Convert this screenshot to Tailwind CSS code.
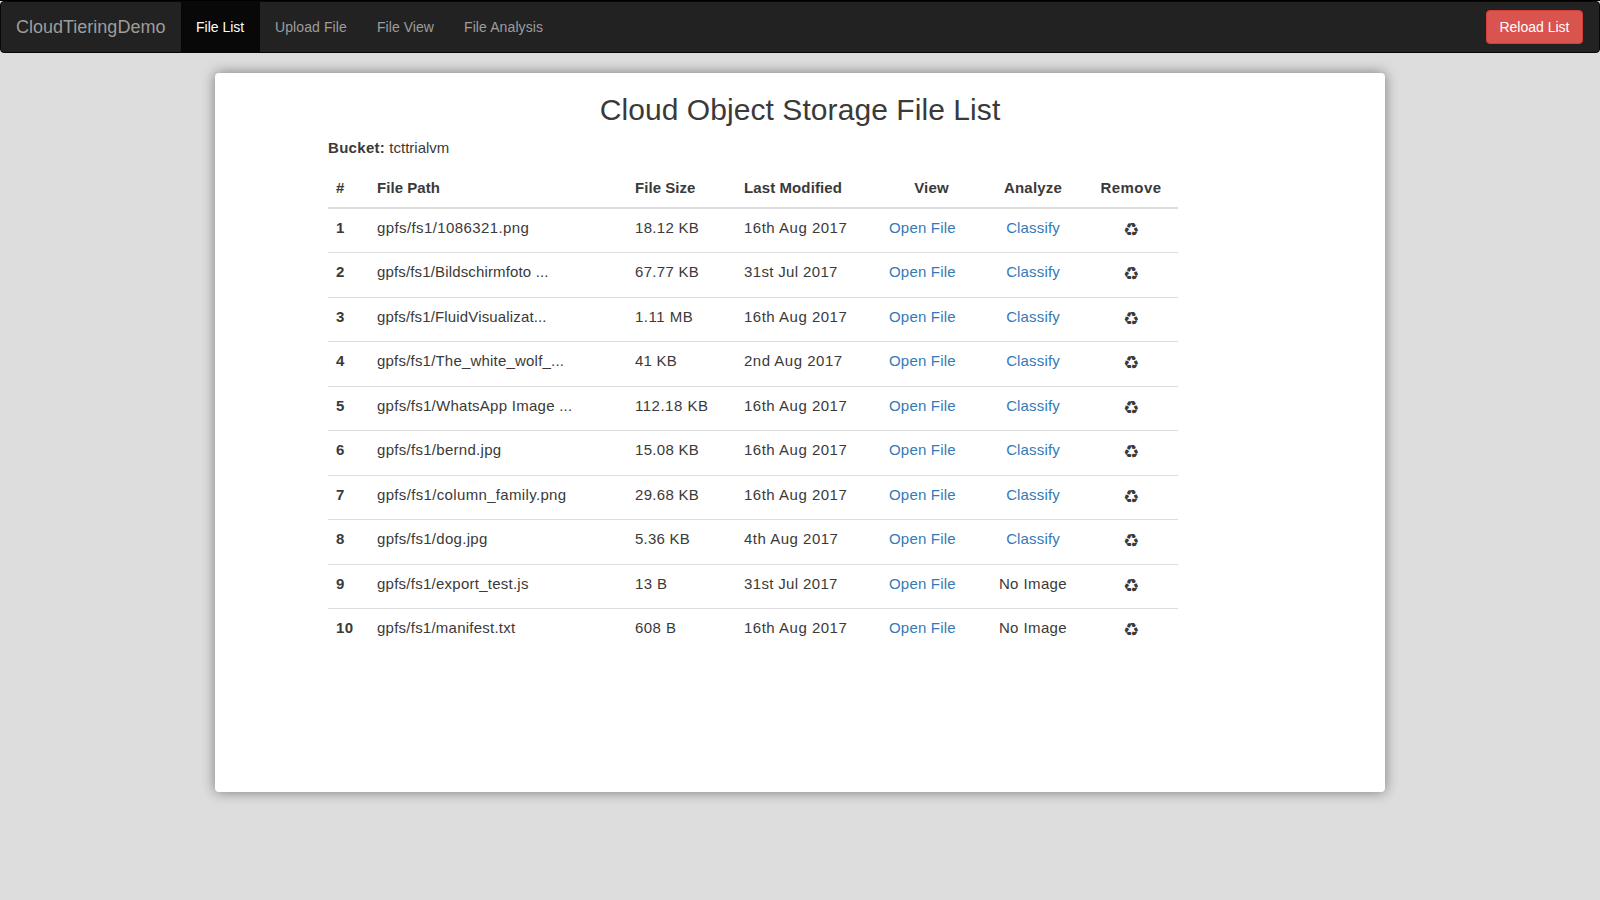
<!DOCTYPE html>
<html lang="en">
<head>
<meta charset="utf-8">
<title>CloudTieringDemo</title>
<script src="https://cdn.jsdelivr.net/npm/@tailwindcss/browser@4"></script>
</head>
<body class="h-screen overflow-hidden border-t border-black bg-[#ddd] font-['Liberation_Sans',Arial,sans-serif] text-[15px] leading-[21px] text-[#3a3a3a]">
<nav class="flex h-[52px] items-start rounded border border-[#080808] bg-[#222] pr-4 text-sm leading-5 text-[#9d9d9d]">
  <a class="w-[180px] py-[15px] pl-[15px] text-[18px] leading-5">CloudTieringDemo</a>
  <a class="w-[79px] bg-[#080808] py-[15px] pl-[15px] text-white">File List</a>
  <a class="w-[102px] py-[15px] pl-[15px] tracking-[0.1px]">Upload File</a>
  <a class="w-[87px] py-[15px] pl-[15px] tracking-[0.05px]">File View</a>
  <a class="py-[15px] pl-[15px] tracking-[0.1px]">File Analysis</a>
  <button class="mt-2 ml-auto h-[34px] w-[97px] rounded border border-[#d43f3a] bg-[#d9534f] text-white">Reload List</button>
</nav>
<main class="mx-auto mt-5 h-[719px] w-[1170px] rounded bg-white px-[113px] pt-5 shadow-[0_0_13px_rgba(0,0,0,0.45)]">
  <h1 class="text-center text-[30px] leading-[33px] tracking-[0.07px]">Cloud Object Storage File List</h1>
  <p class="mt-[11px]"><b class="tracking-[0.3px]">Bucket:</b> <span>tcttrialvm</span></p>
  <div class="mt-[11px] w-[850px]">
    <div class="grid h-10 grid-cols-[41px_258px_109px_145px_101px_102px_94px] border-b-2 border-[#ddd] pt-2 font-bold">
      <span class="pl-2">#</span><span class="pl-2 tracking-[0.05px]">File Path</span><span class="pl-2 tracking-[0.05px]">File Size</span><span class="pl-2 tracking-[0.1px]">Last Modified</span><span class="text-center tracking-[0.2px]">View</span><span class="text-center tracking-[0.2px]">Analyze</span><span class="text-center tracking-[0.4px]">Remove</span>
    </div>
    <div id="rows"></div>
  </div>
</main>
<script>
const files = [
  ['gpfs/fs1/1086321.png', 'tracking-[0.4px]', '18.12 KB', 'tracking-[0.3px]', '16th Aug 2017', true],
  ['gpfs/fs1/Bildschirmfoto ...', 'tracking-[0.15px]', '67.77 KB', 'tracking-[0.3px]', '31st Jul 2017', true],
  ['gpfs/fs1/FluidVisualizat...', 'tracking-[0.15px]', '1.11 MB', 'tracking-[0.5px]', '16th Aug 2017', true],
  ['gpfs/fs1/The_white_wolf_...', 'tracking-[0.2px]', '41 KB', 'tracking-[0.25px]', '2nd Aug 2017', true],
  ['gpfs/fs1/WhatsApp Image ...', 'tracking-[0.26px]', '112.18 KB', 'tracking-[0.5px]', '16th Aug 2017', true],
  ['gpfs/fs1/bernd.jpg', 'tracking-[0.29px]', '15.08 KB', 'tracking-[0.3px]', '16th Aug 2017', true],
  ['gpfs/fs1/column_family.png', 'tracking-[0.34px]', '29.68 KB', 'tracking-[0.3px]', '16th Aug 2017', true],
  ['gpfs/fs1/dog.jpg', 'tracking-[0.29px]', '5.36 KB', 'tracking-[0.25px]', '4th Aug 2017', true],
  ['gpfs/fs1/export_test.js', 'tracking-[0.25px]', '13 B', 'tracking-[0.4px]', '31st Jul 2017', false],
  ['gpfs/fs1/manifest.txt', 'tracking-[0.24px]', '608 B', 'tracking-[0.45px]', '16th Aug 2017', false],
];
document.getElementById('rows').innerHTML = files.map(([path, pt, size, st, date, image], i) => `
  <div class="${i ? 'h-[44.5px] border-t border-[#ddd]' : 'h-[43px]'} grid grid-cols-[41px_258px_109px_145px_101px_102px_94px] pt-2">
    <b class="pl-2 tracking-[0.5px]">${i + 1}</b>
    <span class="pl-2 ${pt}">${path}</span>
    <span class="pl-2 ${st}">${size}</span>
    <span class="pl-2 ${date.includes('Jul') ? 'tracking-[0.35px]' : 'tracking-[0.5px]'}">${date}</span>
    <a class="pl-2 tracking-[0.2px] text-[#337ab7]">Open File</a>
    ${image ? '<a class="text-center tracking-[0.15px] text-[#337ab7]">Classify</a>' : '<span class="text-center tracking-[0.4px]">No Image</span>'}
    <span class="pt-0.5 text-center font-['DejaVu_Sans'] text-[18px]">♻</span>
  </div>`).join('');
</script>
</body>
</html>
